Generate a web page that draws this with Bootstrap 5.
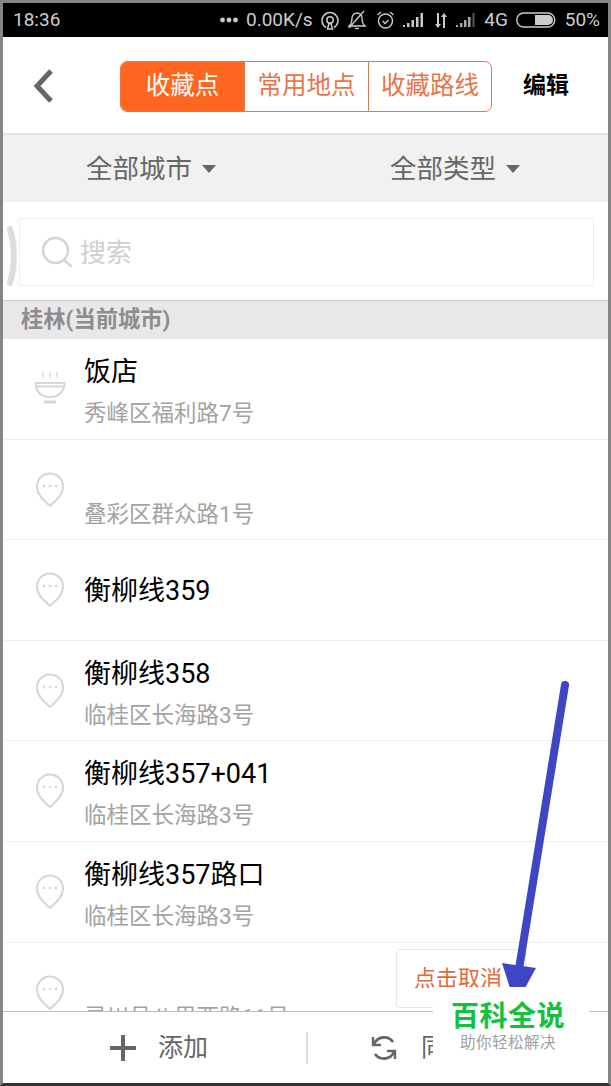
<!DOCTYPE html>
<html lang="zh-CN">

<head>
    <title>收藏点</title>
    <meta charset="utf-8">
    <meta name="viewport" content="width=device-width, initial-scale=1">
    <link href="https://cdn.jsdelivr.net/npm/bootstrap@5.3.3/dist/css/bootstrap.min.css" rel="stylesheet">
    <script src="https://cdn.jsdelivr.net/npm/bootstrap@5.3.3/dist/js/bootstrap.bundle.min.js"></script>
    <style>
        html, body { height: 100%; margin: 0; overflow: hidden; }
        body { font-family: Roboto, "Noto Sans CJK SC", sans-serif; background: #fff; }

        .phone { height: 1086px; border: 3px solid #858585; border-bottom-color: #333; position: relative; overflow: hidden; }

        /* status bar */
        .status-bar { height: 34px; flex: none; background: #000; color: #ccc; font-size: 19px; padding: 0 8px 0 10px; }
        .status-bar svg { display: block; }
        .status-right { gap: 8.4px; }

        /* top nav */
        .top-nav { height: 98px; flex: none; border-bottom: 2px solid #e2e2e2; padding-left: 29px; padding-top: 2px; }
        .back-btn { width: 23px; }
        .seg { margin-left: 65px; height: 51px; width: 372px; border: 1.5px solid #e8744a; border-radius: 7px; overflow: hidden; }
        .seg-item { font-size: 24.5px; color: #e8744a; line-height: 1; white-space: nowrap; }
        .seg-item + .seg-item { border-left: 1.5px solid #d6795a; }
        .seg-item.on { background: #ff6620; color: #fff; width: 123px; }
        .seg-item.mid { width: 124px; }
        .seg-item.last { flex: 1; }
        .edit-btn { margin-left: 31px; font-size: 23px; font-weight: 700; color: #000; }

        /* filter row */
        .filter-row { height: 67px; flex: none; background: #f1f1f1; color: #666; font-size: 26.5px; }
        .filter-a { width: 131px; margin-left: 83px; }
        .filter-b { margin-left: 173px; }
        .caret-tri { width: 0; height: 0; border-left: 7px solid transparent; border-right: 7px solid transparent; border-top: 8px solid #666; margin-left: 10px; margin-top: 1px; }

        /* search */
        .search-wrap { height: 98px; flex: none; padding: 16px 14px 0 16px; position: relative; }
        .search-box { height: 68px; border: 1px solid #eee; color: #d0d0d0; font-size: 26px; padding-left: 21px; gap: 7px; }
        .search-box span { padding-top: 2px; }
        .drawer-handle { position: absolute; left: 4px; top: 24px; width: 12px; height: 60px; }

        /* list */
        .group-head { height: 39px; flex: none; background: #e8e8e8; border-top: 1px solid #ccc; color: #8d8d8d; font-size: 22.300px; font-weight: 700; padding-left: 18px; }
        .list-area { flex: 1; min-height: 0; overflow: hidden; }
        .place { height: 100.600px; border-bottom: 1px solid #efefef; padding-left: 31px; }
        .place-ico { width: 32px; flex: none; margin-right: 18px; }
        .place-ico svg { margin-top: 32px; }
        .place-name { font-size: 27px; color: #000; line-height: 33px; height: 33px; margin-top: 17px; }
        .place-addr { font-size: 22.5px; color: #a3a3a3; line-height: 28px; margin-top: 10px; white-space: nowrap; }
        .place-one .place-name { margin-top: 3px; }

        /* bottom bar */
        .bottom-bar { height: 72px; flex: none; background: #fff; border-top: 1px solid #bdbdbd; color: #666; font-size: 25px; position: relative; }
        .act-add { width: 303px; padding-left: 107px; gap: 22px; }
        .act-sync { padding-left: 63px; gap: 24px; border-left: 2px solid #ddd; height: 32px; }

        /* overlays */
        .toast-box { position: absolute; left: 393px; top: 946px; width: 130px; height: 59px; background: #fff; border: 1px solid #e6e6e6; border-radius: 3px; color: #dd6b3d; font-size: 22px; padding-left: 17px; }
        .arrow-ov { position: absolute; left: 0; top: 0; pointer-events: none; }
        .brand-mark { position: absolute; left: 430px; top: 984px; width: 156px; height: 79px; background: #fff; text-align: center; }
        .brand-name { font-size: 28px; font-weight: 700; color: #12c23f; line-height: 34px; margin-top: 13px; letter-spacing: .5px; margin-right: 6px; }
        .brand-sub { font-size: 15.5px; color: #a0a0a0; line-height: 20px; margin-top: -1px; letter-spacing: .5px; margin-right: 6px; }
    </style>
</head>

<body>

    <div class="phone d-flex flex-column">

        <div class="status-bar d-flex align-items-center justify-content-between">
            <span>18:36</span>
            <div class="status-right d-flex align-items-center">
                <svg width="18" height="6" viewBox="0 0 18 6" fill="#ccc"><circle cx="2.500" cy="3" r="2.400"/><circle cx="9" cy="3" r="2.400"/><circle cx="15.500" cy="3" r="2.400"/></svg>
                <span>0.00K/s</span>
                <svg width="18" height="19" viewBox="0 0 18 19" fill="none" stroke="#ccc" stroke-width="1.500"><path d="M5 16.500a8 8 0 1 1 8 0"/><circle cx="9" cy="9" r="3.200"/><path d="M6.500 18h5l-1.500-5.500h-2z"/></svg>
                <svg width="20" height="20" viewBox="0 0 20 20" fill="none" stroke="#ccc" stroke-width="1.300"><path d="M2 16c2.500-2 3-4.500 3-8a5 5 0 0 1 10 0c0 3.500.5 6 3 8z"/><path d="M2 18L17 1"/><path d="M8 18.500h4"/></svg>
                <svg width="19" height="20" viewBox="0 0 19 20" fill="none" stroke="#ccc" stroke-width="1.400"><circle cx="9.500" cy="11" r="7"/><path d="M6.500 11l2.500 2.500 3.500-3.500"/><path d="M1.500 5l3.500-3M17.500 5L14 2"/></svg>
                <svg width="22" height="16" viewBox="0 0 22 16" fill="#ccc"><rect x="0" y="13" width="2" height="2"/><rect x="4" y="11" width="2.500" height="4"/><rect x="8.500" y="8" width="2.500" height="7"/><rect x="13" y="5" width="2.500" height="10"/><rect x="17.500" y="1" width="2.500" height="14"/></svg>
                <svg width="14" height="17" viewBox="0 0 14 17" fill="#ccc"><path d="M3 1h2v11h2L4 16 1 12h2z"/><path d="M11 16H9V5H7l3-4 3 4h-2z"/></svg>
                <svg width="20" height="16" viewBox="0 0 20 16" fill="#aaa"><rect x="0" y="13" width="2" height="2"/><rect x="4" y="11" width="2.500" height="4"/><rect x="8" y="8" width="2.500" height="7"/><rect x="12" y="5" width="2.500" height="10"/><rect x="16.500" y="1" width="2" height="14" fill="#555"/></svg>
                <span>4G</span>
                <svg width="40" height="16" viewBox="0 0 40 16"><rect x=".75" y="1" width="38" height="14" rx="7" fill="none" stroke="#ccc" stroke-width="1.400"/><path d="M19 3h13a5 5 0 0 1 0 10H19z" fill="#ccc"/></svg>
                <span>50%</span>
            </div>
        </div>

        <div class="top-nav d-flex align-items-center">
            <a class="back-btn d-block">
                <svg width="23" height="36" viewBox="0 0 23 36" fill="none" stroke="#666" stroke-width="5"><path d="M19 3L5 18l14 15"/></svg>
            </a>
            <div class="seg d-flex">
                <div class="seg-item on d-flex align-items-center justify-content-center">收藏点</div>
                <div class="seg-item mid d-flex align-items-center justify-content-center">常用地点</div>
                <div class="seg-item last d-flex align-items-center justify-content-center">收藏路线</div>
            </div>
            <a class="edit-btn text-decoration-none">编辑</a>
        </div>

        <div class="filter-row d-flex align-items-center">
            <div class="filter-a d-flex align-items-center flex-none text-nowrap">全部城市<span class="caret-tri"></span></div>
            <div class="filter-b d-flex align-items-center text-nowrap">全部类型<span class="caret-tri"></span></div>
        </div>

        <div class="search-wrap">
            <svg class="drawer-handle" viewBox="0 0 12 60" fill="none" stroke="#dcdcdc" stroke-width="6" stroke-linecap="round"><path d="M3 3c5 16 5 38 0 54"/></svg>
            <div class="search-box d-flex align-items-center">
                <svg width="32" height="32" viewBox="0 0 32 32" fill="none" stroke="#d4d4d4" stroke-width="2.400" stroke-linecap="round"><circle cx="14.500" cy="14.500" r="12.500"/><path d="M24 25l6 5"/></svg>
                <span>搜索</span>
            </div>
        </div>

        <div class="group-head d-flex align-items-center">桂林(当前城市)</div>

        <div class="list-area">
            <div class="place d-flex align-items-start">
                <div class="place-ico">
                    <svg class="d-block" width="32" height="36" viewBox="0 0 32 36" fill="none" stroke="#d6d6d6" stroke-width="2"><path d="M9 1c-2 2 2 3 0 6M16 1c-2 2 2 3 0 6M23 1c-2 2 2 3 0 6" stroke-width="1.300"/><path d="M1.500 12h29c0 8-5 14-14.500 14S1.500 20 1.500 12z"/><path d="M3 15.500h26"/><path d="M10 31h12" stroke-width="3"/></svg>
                </div>
                <div>
                    <div class="place-name">饭店</div>
                    <div class="place-addr">秀峰区福利路7号</div>
                </div>
            </div>

            <div class="place d-flex align-items-start">
                <div class="place-ico"><svg class="d-block" width="32" height="36" viewBox="0 0 32 36" fill="none" stroke="#d6d6d6" stroke-width="2"><path d="M16 34C8 27 3 22 3 14.500a13 13 0 0 1 26 0C29 22 24 27 16 34z"/><g fill="#d6d6d6" stroke="none"><circle cx="10" cy="14" r="1.300"/><circle cx="16" cy="14" r="1.300"/><circle cx="22" cy="14" r="1.300"/></g></svg></div>
                <div>
                    <div class="place-name"></div>
                    <div class="place-addr">叠彩区群众路1号</div>
                </div>
            </div>

            <div class="place d-flex align-items-start">
                <div class="place-ico"><svg class="d-block" width="32" height="36" viewBox="0 0 32 36" fill="none" stroke="#d6d6d6" stroke-width="2"><path d="M16 34C8 27 3 22 3 14.500a13 13 0 0 1 26 0C29 22 24 27 16 34z"/><g fill="#d6d6d6" stroke="none"><circle cx="10" cy="14" r="1.300"/><circle cx="16" cy="14" r="1.300"/><circle cx="22" cy="14" r="1.300"/></g></svg></div>
                <div class="align-self-center place-one">
                    <div class="place-name">衡柳线359</div>
                </div>
            </div>

            <div class="place d-flex align-items-start">
                <div class="place-ico"><svg class="d-block" width="32" height="36" viewBox="0 0 32 36" fill="none" stroke="#d6d6d6" stroke-width="2"><path d="M16 34C8 27 3 22 3 14.500a13 13 0 0 1 26 0C29 22 24 27 16 34z"/><g fill="#d6d6d6" stroke="none"><circle cx="10" cy="14" r="1.300"/><circle cx="16" cy="14" r="1.300"/><circle cx="22" cy="14" r="1.300"/></g></svg></div>
                <div>
                    <div class="place-name">衡柳线358</div>
                    <div class="place-addr">临桂区长海路3号</div>
                </div>
            </div>

            <div class="place d-flex align-items-start">
                <div class="place-ico"><svg class="d-block" width="32" height="36" viewBox="0 0 32 36" fill="none" stroke="#d6d6d6" stroke-width="2"><path d="M16 34C8 27 3 22 3 14.500a13 13 0 0 1 26 0C29 22 24 27 16 34z"/><g fill="#d6d6d6" stroke="none"><circle cx="10" cy="14" r="1.300"/><circle cx="16" cy="14" r="1.300"/><circle cx="22" cy="14" r="1.300"/></g></svg></div>
                <div>
                    <div class="place-name">衡柳线357+041</div>
                    <div class="place-addr">临桂区长海路3号</div>
                </div>
            </div>

            <div class="place d-flex align-items-start">
                <div class="place-ico"><svg class="d-block" width="32" height="36" viewBox="0 0 32 36" fill="none" stroke="#d6d6d6" stroke-width="2"><path d="M16 34C8 27 3 22 3 14.500a13 13 0 0 1 26 0C29 22 24 27 16 34z"/><g fill="#d6d6d6" stroke="none"><circle cx="10" cy="14" r="1.300"/><circle cx="16" cy="14" r="1.300"/><circle cx="22" cy="14" r="1.300"/></g></svg></div>
                <div>
                    <div class="place-name">衡柳线357路口</div>
                    <div class="place-addr">临桂区长海路3号</div>
                </div>
            </div>

            <div class="place d-flex align-items-start">
                <div class="place-ico"><svg class="d-block" width="32" height="36" viewBox="0 0 32 36" fill="none" stroke="#d6d6d6" stroke-width="2"><path d="M16 34C8 27 3 22 3 14.500a13 13 0 0 1 26 0C29 22 24 27 16 34z"/><g fill="#d6d6d6" stroke="none"><circle cx="10" cy="14" r="1.300"/><circle cx="16" cy="14" r="1.300"/><circle cx="22" cy="14" r="1.300"/></g></svg></div>
                <div>
                    <div class="place-name"></div>
                    <div class="place-addr">灵川县八里西路11号</div>
                </div>
            </div>
        </div>

        <div class="bottom-bar d-flex align-items-center">
            <div class="act-add d-flex align-items-center">
                <svg width="26" height="26" viewBox="0 0 26 26" fill="#666"><rect x="11" y="0" width="4" height="26"/><rect x="0" y="11" width="26" height="4"/></svg>
                <span>添加</span>
            </div>
            <div class="act-sync d-flex align-items-center">
                <svg width="26" height="30" viewBox="0 0 26 30" fill="none" stroke="#666" stroke-width="2.800"><path d="M22 9a11 11 0 0 0-19 2"/><path d="M4 21a11 11 0 0 0 19-2"/><path d="M2 4v8h8M24 26v-8h-8" stroke-width="2.400"/></svg>
                <span>同步</span>
            </div>
        </div>

        <div class="toast-box d-flex align-items-center">点击取消</div>
        <svg class="arrow-ov" width="605" height="1080" viewBox="0 0 605 1080" fill="#3e46c4"><path d="M562 682L516 966" stroke="#3e46c4" stroke-width="8" stroke-linecap="round"/><path d="M499 960l34 5-11 20h-15z"/></svg>
        <div class="brand-mark">
            <div class="brand-name">百科全说</div>
            <div class="brand-sub">助你轻松解决</div>
        </div>
    </div>

</body>
</html>
